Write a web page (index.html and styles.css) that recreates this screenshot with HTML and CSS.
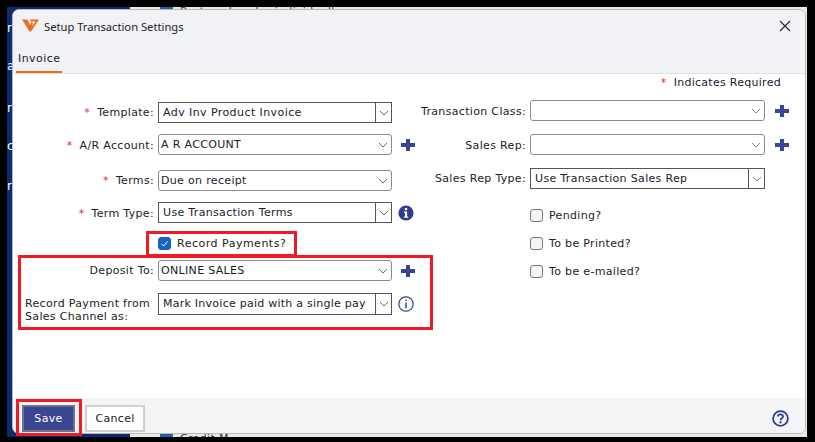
FILE: index.html
```html
<!DOCTYPE html>
<html lang="en">
<head>
<meta charset="utf-8">
<title>Setup Transaction Settings</title>
<link rel="stylesheet" href="styles.css">
</head>
<body>
<div class="screen">
  <div class="backdrop">
    <div class="nav-strip">
      <span class="nav-letter l1">r</span><span class="nav-letter l2">a</span><span class="nav-letter l3">r</span><span class="nav-letter l4">c</span><span class="nav-letter l5">r</span>
    </div>
    <div class="behind-top"><span class="behind-box"></span>Post each order individually</div>
    <div class="behind-bottom"><span class="behind-box"></span>Credit M</div>
  </div>
  <div class="dialog">
    <header class="title-bar">
      <svg class="logo" viewBox="0 0 17 13" width="17" height="13"><path d="M0 .5H5.5L8 6L9.5 3.5L8 .5H17L9 12.5H7.5Z" fill="#f26a1b"/><path d="M9.8 2.5H13.5L10 7.8L11 4.8Z" fill="#fff"/></svg>
      <span class="title">Setup Transaction Settings</span>
      <svg class="close" viewBox="0 0 12 12" width="12" height="12"><path d="M1 1 L11 11 M11 1 L1 11" stroke="#222" stroke-width="1.1"/></svg>
    </header>
    <nav class="tabs"><span class="tab">Invoice</span></nav>
    <main class="body">
      <p class="required-note"><span class="star">*</span>Indicates Required</p>
      <div class="columns">
        <section class="col-left">
          <div class="row r-template">
            <label class="lbl"><span class="star">*</span>Template:</label>
            <div class="select boxed"><span class="val tight adv">Adv Inv Product Invoice</span><span class="arrow sep"><svg viewBox="0 0 10 6" width="10" height="6"><path d="M1 1 L5 5 L9 1" fill="none" stroke="#666"/></svg></span></div>
          </div>
          <div class="row r-ar">
            <label class="lbl low"><span class="star">*</span>A/R Account:</label>
            <div class="select soft"><span class="val">A R ACCOUNT</span><span class="arrow"><svg viewBox="0 0 10 6" width="10" height="6"><path d="M1 1 L5 5 L9 1" fill="none" stroke="#666"/></svg></span></div>
            <svg class="plus" viewBox="0 0 14 14" width="14" height="14"><path d="M5 1H9V5H14V9H9V13H5V9H0V5H5Z" fill="#3a4594"/></svg>
          </div>
          <div class="row r-terms">
            <label class="lbl"><span class="star">*</span>Terms:</label>
            <div class="select soft"><span class="val">Due on receipt</span><span class="arrow"><svg viewBox="0 0 10 6" width="10" height="6"><path d="M1 1 L5 5 L9 1" fill="none" stroke="#666"/></svg></span></div>
          </div>
          <div class="row r-type">
            <label class="lbl low"><span class="star">*</span>Term Type:</label>
            <div class="select boxed"><span class="val tight">Use Transaction Terms</span><span class="arrow sep"><svg viewBox="0 0 10 6" width="10" height="6"><path d="M1 1 L5 5 L9 1" fill="none" stroke="#666"/></svg></span></div>
            <svg class="info" viewBox="0 0 16 16" width="16" height="16"><circle cx="8" cy="8" r="7.6" fill="#2f3f8f"/><rect x="6.9" y="3" width="2.2" height="2.2" fill="#fff"/><path d="M6 6.6H9.1V11.4H10.2V12.8H6V11.4H7V8H6Z" fill="#fff"/></svg>
          </div>
          <div class="row r-record">
            <span class="lbl"></span>
            <span class="checkbox checked"><svg viewBox="0 0 13 13" width="13" height="13"><path d="M3.5 6.8 L5.6 9 L9.7 4.4" fill="none" stroke="#fff" stroke-width="1"/></svg></span>
            <span class="check-text wide">Record Payments?</span>
          </div>
          <div class="row r-deposit">
            <label class="lbl">Deposit To:</label>
            <div class="select soft"><span class="val">ONLINE SALES</span><span class="arrow"><svg viewBox="0 0 10 6" width="10" height="6"><path d="M1 1 L5 5 L9 1" fill="none" stroke="#666"/></svg></span></div>
            <svg class="plus" viewBox="0 0 14 14" width="14" height="14"><path d="M5 1H9V5H14V9H9V13H5V9H0V5H5Z" fill="#3a4594"/></svg>
          </div>
          <div class="row r-channel">
            <label class="lbl multi">Record Payment from Sales Channel as:</label>
            <div class="select boxed"><span class="val tight mark">Mark Invoice paid with a single pay</span><span class="arrow sep"><svg viewBox="0 0 10 6" width="10" height="6"><path d="M1 1 L5 5 L9 1" fill="none" stroke="#666"/></svg></span></div>
            <svg class="info" viewBox="0 0 16 16" width="16" height="16"><circle cx="8" cy="8" r="7.2" fill="#fff" stroke="#2f3f8f" stroke-width="1.2"/><rect x="7.3" y="3.6" width="1.4" height="1.6" fill="#2f3f8f"/><rect x="7.3" y="6.6" width="1.4" height="5.8" fill="#2f3f8f"/></svg>
          </div>
        </section>
        <section class="col-right">
          <div class="row rr-class">
            <label class="lbl low">Transaction Class:</label>
            <div class="select soft"><span class="val"></span><span class="arrow"><svg viewBox="0 0 10 6" width="10" height="6"><path d="M1 1 L5 5 L9 1" fill="none" stroke="#888"/></svg></span></div>
            <svg class="plus" viewBox="0 0 14 14" width="14" height="14"><path d="M5 1H9V5H14V9H9V13H5V9H0V5H5Z" fill="#3a4594"/></svg>
          </div>
          <div class="row rr-rep">
            <label class="lbl low">Sales Rep:</label>
            <div class="select soft"><span class="val"></span><span class="arrow"><svg viewBox="0 0 10 6" width="10" height="6"><path d="M1 1 L5 5 L9 1" fill="none" stroke="#888"/></svg></span></div>
            <svg class="plus" viewBox="0 0 14 14" width="14" height="14"><path d="M5 1H9V5H14V9H9V13H5V9H0V5H5Z" fill="#3a4594"/></svg>
          </div>
          <div class="row rr-type">
            <label class="lbl">Sales Rep Type:</label>
            <div class="select boxed"><span class="val tight">Use Transaction Sales Rep</span><span class="arrow sep"><svg viewBox="0 0 10 6" width="10" height="6"><path d="M1 1 L5 5 L9 1" fill="none" stroke="#888"/></svg></span></div>
          </div>
          <div class="checks">
            <div class="check-row"><span class="checkbox"></span><span class="check-text">Pending?</span></div>
            <div class="check-row"><span class="checkbox"></span><span class="check-text">To be Printed?</span></div>
            <div class="check-row"><span class="checkbox"></span><span class="check-text">To be e-mailed?</span></div>
          </div>
        </section>
      </div>
    </main>
    <footer class="footer">
      <button class="btn save">Save</button>
      <button class="btn cancel">Cancel</button>
      <svg class="help" viewBox="0 0 17 17" width="17" height="17"><circle cx="8.5" cy="8.5" r="7.4" fill="none" stroke="#2f3f8f" stroke-width="1.8"/><path d="M5.9 6.6C5.9 3.7 11.1 3.7 11.1 6.5C11.1 8.4 8.5 8.3 8.5 10.3" fill="none" stroke="#2f3f8f" stroke-width="1.8"/><rect x="7.5" y="11.3" width="2" height="2" fill="#2f3f8f"/></svg>
    </footer>
  </div>
  <div class="hl hl-record"></div>
  <div class="hl hl-group"></div>
  <div class="hl hl-save"></div>
</div>
</body>
</html>
```

FILE: styles.css
```css
* { box-sizing: border-box; }
html, body { margin: 0; padding: 0; background: #000; }
body { width: 815px; height: 442px; overflow: hidden; font-family: "DejaVu Sans", sans-serif; font-size: 11px; letter-spacing: 0.33px; color: #1a1a2a; }
.screen { position: relative; width: 815px; height: 442px; background: #000; }

.backdrop { position: absolute; left: 7px; top: 7px; width: 800px; height: 430px; background: #e9e9e9; overflow: hidden; }
.nav-strip { position: absolute; left: 0; top: 0; width: 123px; height: 430px; background: #0e2a70; color: #fff; font-size: 12px; }
.nav-letter { position: absolute; left: 0; }
.l1 { top: 14px; } .l2 { top: 52px; } .l3 { top: 94px; } .l4 { top: 132px; } .l5 { top: 172px; }
.behind-top, .behind-bottom { position: absolute; left: 153px; color: #333; white-space: nowrap; line-height: 14px; }
.behind-top { top: -3px; }
.behind-bottom { top: 424px; }
.behind-box { display: inline-block; width: 13px; height: 13px; background: #1f5fae; margin-right: 7px; vertical-align: -2px; }

.dialog { position: absolute; left: 12px; top: 9px; width: 794px; height: 425px; display: flex; flex-direction: column; background: #fff; border: 1px solid #b9b9b9; border-radius: 7px; overflow: hidden; }
.title-bar { height: 31px; flex: none; display: flex; align-items: center; padding: 2px 15px 0 9px; background: #f1f2f6; }
.logo { margin-right: 5px; margin-top: -3px; }
.title { flex: 1; font-family: "Noto Sans", sans-serif; font-size: 11.2px; letter-spacing: 0; color: #222; }
.close { margin-top: -2px; margin-right: -1px; }
.tabs { height: 33px; flex: none; background: #f1f2f6; border-bottom: 1px solid #e0e0e0; padding: 9px 0 0 3px; }
.tab { display: block; width: 46px; height: 23px; padding-left: 2px; border-bottom: 2px solid #f26a10; line-height: 18px; color: #222; letter-spacing: 0.45px; }
.body { flex: 1; position: relative; padding: 0 24px 0 5px; }
.required-note { margin: 2px 0 0; height: 14px; line-height: 14px; text-align: right; letter-spacing: 0.28px; }
.star { color: #f0222e; margin-right: 7px; }
.columns { display: flex; }
.col-left { width: 400px; flex: none; padding-top: 12px; }
.col-right { width: 372px; flex: none; padding-top: 10px; }

.row { display: flex; align-items: center; height: 21px; }
.lbl { text-align: right; padding-right: 4px; flex: none; white-space: nowrap; color: #222; }
.lbl.low { padding-top: 2px; }
.col-left .lbl { width: 140px; }
.col-right .lbl { width: 112px; }
.lbl.multi { white-space: normal; text-align: left; align-self: flex-start; padding: 4px 0 0 7px; line-height: 13px; }

.select { height: 21px; display: flex; align-items: stretch; background: #fff; flex: none; }
.col-left .select { width: 234px; }
.col-right .select { width: 235px; }
.soft { border: 1px solid #8a8a8a; border-radius: 3px; }
.boxed { border: 1px solid #555; }
.val { flex: 1; line-height: 19px; padding-left: 2px; white-space: nowrap; overflow: hidden; color: #1a1a2a; }
.val.tight { padding-left: 4px; }
.val.adv { letter-spacing: 0.42px; }
.val.mark { letter-spacing: 0.25px; }
.arrow { width: 16px; flex: none; display: flex; align-items: center; justify-content: center; }
.arrow.sep { border-left: 1px solid #555; }
.plus { margin-left: 9px; flex: none; }
.info { margin-left: 6px; flex: none; }
.col-right .plus { margin-left: 10px; }

.r-ar { margin-top: 11px; }
.r-terms { margin-top: 15px; }
.r-type { margin-top: 11px; }
.r-record { margin-top: 14px; height: 13px; }
.r-deposit { margin-top: 10px; }
.r-channel { margin-top: 12px; height: 22px; }
.r-channel .select { height: 22px; }
.rr-rep { margin-top: 13px; }
.rr-type { margin-top: 13px; }

.checkbox { width: 13px; height: 13px; flex: none; border: 1px solid #767676; border-radius: 3px; background: #f4f4f4; display: block; }
.checkbox.checked { background: #1565c0; border-color: #1565c0; position: relative; }
.checkbox.checked svg { position: absolute; left: -1px; top: -1px; }
.check-text { margin-left: 6px; color: #222; white-space: nowrap; }
.check-text.wide { letter-spacing: 0.5px; }
.checks { margin-left: 112px; margin-top: 20px; display: flex; flex-direction: column; gap: 15px; }
.check-row { display: flex; align-items: center; height: 13px; }

.footer { height: 35px; flex: none; display: flex; align-items: center; background: #f3f4f6; padding: 5px 16px 0 9px; }
.btn { font-family: inherit; font-size: 11px; letter-spacing: inherit; height: 27px; padding: 0; }
.save { width: 53px; background: #3a4594; color: #fff; border: 2px solid #6d7286; }
.cancel { width: 60px; margin-left: 10px; background: #fff; color: #222; border: 2px solid #cfcfcf; }
.help { margin-left: auto; }

.hl { position: absolute; border: 3px solid #ed1c24; }
.hl-record { left: 146px; top: 231px; width: 151px; height: 26px; }
.hl-group { left: 18px; top: 255px; width: 415px; height: 75px; }
.hl-save { left: 16px; top: 399px; width: 66px; height: 37px; }
```
